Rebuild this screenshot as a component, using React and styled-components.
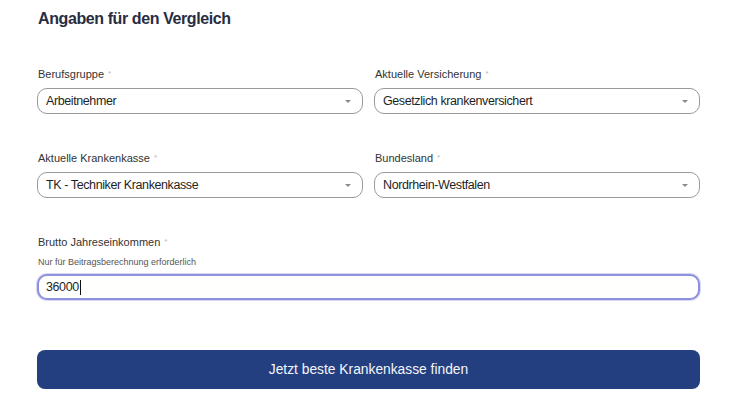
import React from "react";
import styled, { createGlobalStyle } from "styled-components";

const Global = createGlobalStyle`
  html, body { margin: 0; padding: 0; background: #ffffff; }
  body { font-family: "Liberation Sans", Arial, sans-serif; }
`;

const Page = styled.div`
  width: 734px;
  height: 400px;
  box-sizing: border-box;
  padding: 9px 34px 0 37px;
  overflow: hidden;
`;

const Title = styled.h2`
  margin: 0 0 38px 1px;
  font-size: 16px;
  line-height: 20px;
  letter-spacing: -0.4px;
  font-weight: 700;
  color: #282d42;
`;

const Grid = styled.div`
  display: grid;
  grid-template-columns: 326px 326px;
  column-gap: 11px;
  row-gap: 37px;
`;

const Field = styled.div`
  display: flex;
  flex-direction: column;
  grid-column: ${(p) => (p.$full ? "1 / -1" : "auto")};
`;

const Label = styled.label`
  font-size: 11px;
  line-height: 14px;
  color: #333;
  margin: 0 0 ${(p) => (p.$tight ? "7px" : "7px")} 1px;
`;

const Star = styled.span`
  color: #b9b9b9;
  font-size: 8px;
  margin-left: 4px;
  vertical-align: 2px;
`;

const Helper = styled.div`
  font-size: 9px;
  line-height: 12px;
  color: #555;
  margin: 0 0 6px 1px;
`;

const SelectBox = styled.div`
  position: relative;
  box-sizing: border-box;
  height: 26px;
  border: 1px solid #9a9a9a;
  border-radius: 10px;
  display: flex;
  align-items: center;
  padding: 0 28px 0 8px;
  font-size: 12.5px;
  letter-spacing: -0.4px;
  color: #1f1f1f;
  background: #fff;
`;

const Arrow = styled.span`
  position: absolute;
  right: 11px;
  top: 11px;
  width: 0;
  height: 0;
  border-left: 3.5px solid transparent;
  border-right: 3.5px solid transparent;
  border-top: 3.5px solid #8a8a8a;
`;

const InputBox = styled.div`
  box-sizing: border-box;
  width: 663px;
  height: 26px;
  border: 2px solid #8e90dd;
  border-radius: 10px;
  box-shadow: 0 0 0 1px rgba(142, 144, 221, 0.35);
  display: flex;
  align-items: center;
  padding: 0 7px;
  font-size: 12.5px;
  letter-spacing: -0.4px;
  color: #1f1f1f;
  background: #fffffd;
`;

const Caret = styled.span`
  display: inline-block;
  width: 1px;
  height: 15px;
  background: #111;
  margin-left: 1px;
`;

const Submit = styled.button`
  margin-top: 50px;
  width: 663px;
  height: 39px;
  border: none;
  border-radius: 8px;
  background: #233f80;
  color: #f4f6fb;
  font-family: "Liberation Sans", Arial, sans-serif;
  font-size: 13.8px;
  cursor: pointer;
`;

const Select = ({ value }) => (
  <SelectBox>
    {value}
    <Arrow />
  </SelectBox>
);

export default function App() {
  return (
    <>
      <Global />
      <Page>
        <Title>Angaben für den Vergleich</Title>
        <Grid>
          <Field>
            <Label>Berufsgruppe<Star>*</Star></Label>
            <Select value="Arbeitnehmer" />
          </Field>
          <Field>
            <Label>Aktuelle Versicherung<Star>*</Star></Label>
            <Select value="Gesetzlich krankenversichert" />
          </Field>
          <Field>
            <Label>Aktuelle Krankenkasse<Star>*</Star></Label>
            <Select value="TK - Techniker Krankenkasse" />
          </Field>
          <Field>
            <Label>Bundesland<Star>*</Star></Label>
            <Select value="Nordrhein-Westfalen" />
          </Field>
          <Field $full>
            <Label $tight>Brutto Jahreseinkommen<Star>*</Star></Label>
            <Helper>Nur für Beitragsberechnung erforderlich</Helper>
            <InputBox>36000<Caret /></InputBox>
          </Field>
        </Grid>
        <Submit>Jetzt beste Krankenkasse finden</Submit>
      </Page>
    </>
  );
}
